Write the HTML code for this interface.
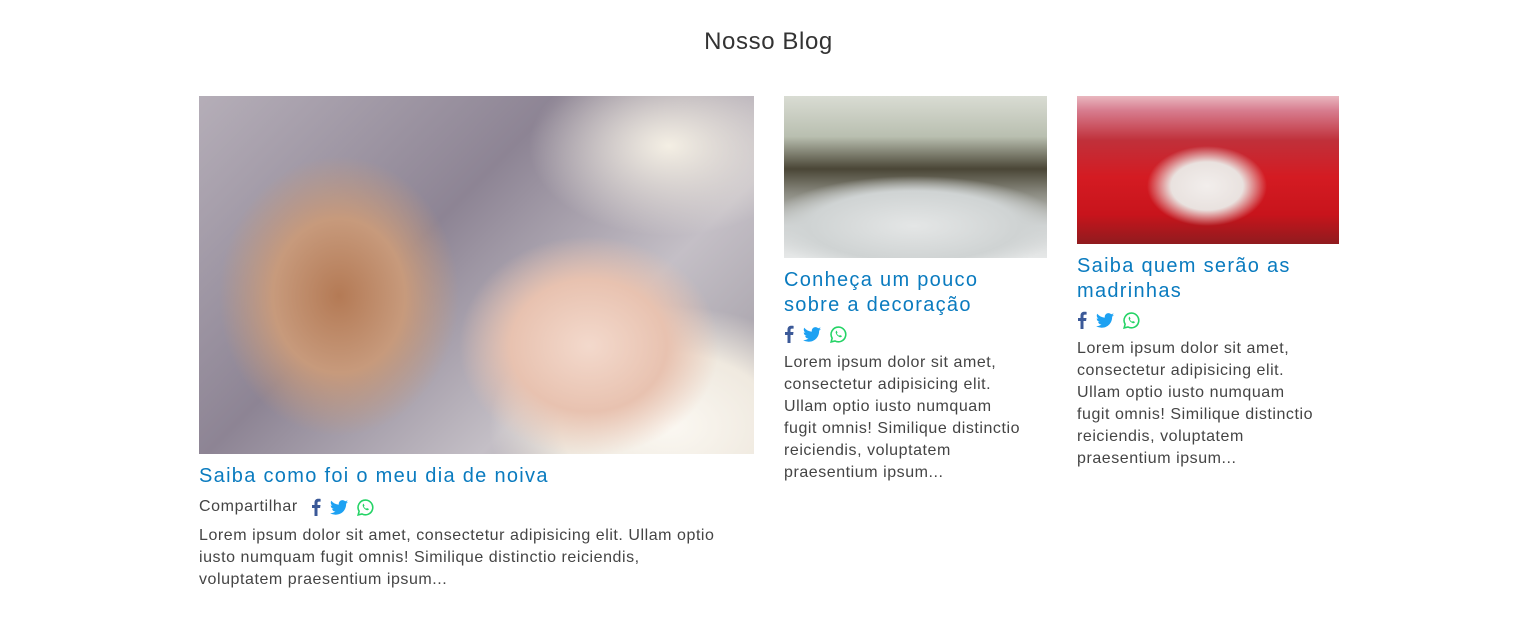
<!DOCTYPE html>
<html><head><meta charset="utf-8"><style>
body{margin:0;background:#fff;font-family:"Liberation Sans",sans-serif;color:#444;width:1537px;height:620px;overflow:hidden;position:relative}
h1{position:absolute;top:28px;left:0;width:1537px;text-align:center;margin:0;font-weight:normal;font-size:24px;color:#333;letter-spacing:.6px}
.card{position:absolute}
.img{display:block}
.t{color:#0a7bbf;font-size:20px;line-height:25px;margin:0;letter-spacing:1.3px;white-space:nowrap}
.sh{display:flex;align-items:center;gap:9px;font-size:16px;color:#444;height:26px;letter-spacing:.6px}
.p{font-size:16px;line-height:22px;color:#444;margin:0;letter-spacing:.55px;white-space:nowrap}
svg{display:block}
</style></head><body>
<h1>Nosso Blog</h1>

<div class="card" style="left:199px;top:96px;width:556px">
<div class="img" style="width:555px;height:358px;background:
radial-gradient(ellipse 130px 110px at 390px 250px,#f3d9cc 0,#e8c2b0 60%,transparent 100%),
radial-gradient(ellipse 120px 140px at 140px 200px,#b47a55 0,#c79a7c 55%,transparent 100%),
radial-gradient(ellipse 180px 120px at 470px 330px,#fbf8f2 0,#efe9df 60%,transparent 100%),
radial-gradient(ellipse 140px 90px at 470px 50px,#f4efe4 0,transparent 100%),
linear-gradient(135deg,#b5aeb8,#8d8494 40%,#c4bfc6 70%,#9c97a0)"></div>
<div class="t" style="margin-top:10px">Saiba como foi o meu dia de noiva</div>
<div class="sh" style="margin-top:5px"><span style="margin-right:4px">Compartilhar</span>
<svg width="10" height="18" viewBox="0 0 10 18"><path d="M6.5 18V10h2.6l.4-3H6.5V5.1c0-.9.3-1.5 1.5-1.5H9.6V.9C9.3.8 8.4.7 7.3.7 5.1.7 3.5 2 3.5 4.6V7H1v3h2.5v8z" fill="#3b5998"/></svg>
<svg width="18" height="15" viewBox="0 0 24 20"><path d="M24 2.4c-.9.4-1.8.7-2.8.8 1-.6 1.8-1.6 2.2-2.7-1 .6-2 1-3.1 1.2C19.4.7 18.1.1 16.6.1c-2.7 0-4.9 2.2-4.9 4.9 0 .4 0 .8.1 1.1C7.7 5.9 4.1 4 1.7 1 1.2 1.8 1 2.6 1 3.5c0 1.7.9 3.2 2.2 4.1-.8 0-1.6-.2-2.2-.6v.1c0 2.4 1.7 4.4 3.9 4.8-.4.1-.8.2-1.3.2-.3 0-.6 0-.9-.1.6 2 2.4 3.4 4.6 3.4-1.7 1.3-3.8 2.1-6.1 2.1-.4 0-.8 0-1.2-.1 2.2 1.4 4.8 2.2 7.5 2.2 9.1 0 14-7.5 14-14v-.6c1-.7 1.8-1.6 2.5-2.6z" fill="#1da1f2"/></svg>
<svg width="17" height="17" viewBox="0 0 24 24"><path d="M12 1.5A10.4 10.4 0 0 0 3 17.2L1.6 22.5l5.4-1.4A10.4 10.4 0 1 0 12 1.5z" fill="none" stroke="#25d366" stroke-width="2.2"/><path d="M8.5 7c.3-.4.8-.4 1-.1l1 2.2c.1.3 0 .6-.2.8l-.6.6c.7 1.4 1.9 2.6 3.3 3.3l.6-.7c.2-.2.5-.3.8-.2l2.2 1c.3.2.3.7 0 1-.6.8-1.6 1.2-2.6.9-2.8-.9-5-3.1-5.9-5.9-.3-1 .1-2.1.4-2.9z" fill="#25d366"/></svg>
</div>
<p class="p" style="margin-top:5px">Lorem ipsum dolor sit amet, consectetur adipisicing elit. Ullam optio<br>iusto numquam fugit omnis! Similique distinctio reiciendis,<br>voluptatem praesentium ipsum...</p>
</div>

<div class="card" style="left:784px;top:96px;width:264px">
<div class="img" style="width:263px;height:162px;background:
radial-gradient(ellipse 150px 50px at 130px 130px,#e4e6e6 0,#cfd3d3 70%,transparent 100%),
linear-gradient(180deg,#d9dcd3 0,#b9bfb0 25%,#4a4636 45%,#8a8a80 60%,#d0d3d3 80%,#e6e8e8 100%)"></div>
<div class="t" style="margin-top:10px">Conheça um pouco<br>sobre a decoração</div>
<div class="sh" style="margin-top:3px">
<svg width="10" height="18" viewBox="0 0 10 18"><path d="M6.5 18V10h2.6l.4-3H6.5V5.1c0-.9.3-1.5 1.5-1.5H9.6V.9C9.3.8 8.4.7 7.3.7 5.1.7 3.5 2 3.5 4.6V7H1v3h2.5v8z" fill="#3b5998"/></svg>
<svg width="18" height="15" viewBox="0 0 24 20"><path d="M24 2.4c-.9.4-1.8.7-2.8.8 1-.6 1.8-1.6 2.2-2.7-1 .6-2 1-3.1 1.2C19.4.7 18.1.1 16.6.1c-2.7 0-4.9 2.2-4.9 4.9 0 .4 0 .8.1 1.1C7.7 5.9 4.1 4 1.7 1 1.2 1.8 1 2.6 1 3.5c0 1.7.9 3.2 2.2 4.1-.8 0-1.6-.2-2.2-.6v.1c0 2.4 1.7 4.4 3.9 4.8-.4.1-.8.2-1.3.2-.3 0-.6 0-.9-.1.6 2 2.4 3.4 4.6 3.4-1.7 1.3-3.8 2.1-6.1 2.1-.4 0-.8 0-1.2-.1 2.2 1.4 4.8 2.2 7.5 2.2 9.1 0 14-7.5 14-14v-.6c1-.7 1.8-1.6 2.5-2.6z" fill="#1da1f2"/></svg>
<svg width="17" height="17" viewBox="0 0 24 24"><path d="M12 1.5A10.4 10.4 0 0 0 3 17.2L1.6 22.5l5.4-1.4A10.4 10.4 0 1 0 12 1.5z" fill="none" stroke="#25d366" stroke-width="2.2"/><path d="M8.5 7c.3-.4.8-.4 1-.1l1 2.2c.1.3 0 .6-.2.8l-.6.6c.7 1.4 1.9 2.6 3.3 3.3l.6-.7c.2-.2.5-.3.8-.2l2.2 1c.3.2.3.7 0 1-.6.8-1.6 1.2-2.6.9-2.8-.9-5-3.1-5.9-5.9-.3-1 .1-2.1.4-2.9z" fill="#25d366"/></svg>
</div>
<p class="p" style="margin-top:5px">Lorem ipsum dolor sit amet,<br>consectetur adipisicing elit.<br>Ullam optio iusto numquam<br>fugit omnis! Similique distinctio<br>reiciendis, voluptatem<br>praesentium ipsum...</p>
</div>

<div class="card" style="left:1077px;top:96px;width:263px">
<div class="img" style="width:262px;height:148px;background:
radial-gradient(ellipse 60px 40px at 130px 90px,#f2eeec 0,#e9e2df 60%,transparent 100%),
linear-gradient(180deg,#e9b7bf 0,#d77c8e 10%,#c0303a 30%,#d41b22 55%,#c8141c 80%,#8f1b1e 100%)"></div>
<div class="t" style="margin-top:10px">Saiba quem serão as<br>madrinhas</div>
<div class="sh" style="margin-top:3px">
<svg width="10" height="18" viewBox="0 0 10 18"><path d="M6.5 18V10h2.6l.4-3H6.5V5.1c0-.9.3-1.5 1.5-1.5H9.6V.9C9.3.8 8.4.7 7.3.7 5.1.7 3.5 2 3.5 4.6V7H1v3h2.5v8z" fill="#3b5998"/></svg>
<svg width="18" height="15" viewBox="0 0 24 20"><path d="M24 2.4c-.9.4-1.8.7-2.8.8 1-.6 1.8-1.6 2.2-2.7-1 .6-2 1-3.1 1.2C19.4.7 18.1.1 16.6.1c-2.7 0-4.9 2.2-4.9 4.9 0 .4 0 .8.1 1.1C7.7 5.9 4.1 4 1.7 1 1.2 1.8 1 2.6 1 3.5c0 1.7.9 3.2 2.2 4.1-.8 0-1.6-.2-2.2-.6v.1c0 2.4 1.7 4.4 3.9 4.8-.4.1-.8.2-1.3.2-.3 0-.6 0-.9-.1.6 2 2.4 3.4 4.6 3.4-1.7 1.3-3.8 2.1-6.1 2.1-.4 0-.8 0-1.2-.1 2.2 1.4 4.8 2.2 7.5 2.2 9.1 0 14-7.5 14-14v-.6c1-.7 1.8-1.6 2.5-2.6z" fill="#1da1f2"/></svg>
<svg width="17" height="17" viewBox="0 0 24 24"><path d="M12 1.5A10.4 10.4 0 0 0 3 17.2L1.6 22.5l5.4-1.4A10.4 10.4 0 1 0 12 1.5z" fill="none" stroke="#25d366" stroke-width="2.2"/><path d="M8.5 7c.3-.4.8-.4 1-.1l1 2.2c.1.3 0 .6-.2.8l-.6.6c.7 1.4 1.9 2.6 3.3 3.3l.6-.7c.2-.2.5-.3.8-.2l2.2 1c.3.2.3.7 0 1-.6.8-1.6 1.2-2.6.9-2.8-.9-5-3.1-5.9-5.9-.3-1 .1-2.1.4-2.9z" fill="#25d366"/></svg>
</div>
<p class="p" style="margin-top:5px">Lorem ipsum dolor sit amet,<br>consectetur adipisicing elit.<br>Ullam optio iusto numquam<br>fugit omnis! Similique distinctio<br>reiciendis, voluptatem<br>praesentium ipsum...</p>
</div>
</body></html>
